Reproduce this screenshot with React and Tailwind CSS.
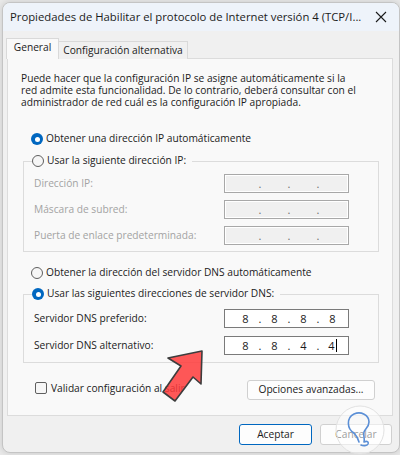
import React from "react";

const font = { fontFamily: '"Open Sans", "Noto Sans", sans-serif' };

const Radio = ({ checked }) =>
  checked ? (
    <span className="w-[12px] h-[12px] rounded-full bg-[#0067c0] flex items-center justify-center shrink-0">
      <span className="w-[5px] h-[5px] rounded-full bg-white"></span>
    </span>
  ) : (
    <span className="w-[12px] h-[12px] rounded-full border border-[#5f5f5f] bg-[#f6f6f6] shrink-0"></span>
  );

const IpBox = ({ values, disabled, cursor }) => (
  <div
    className={`w-[125px] h-[19px] border flex items-center pl-[11px] text-[11px] ${
      disabled
        ? "bg-[#f0f0f0] border-[#a8a8a8] shadow-[inset_0_0_0_1px_#ffffff] text-[#6d6d6d]"
        : "bg-white border-[#7a7a7a] text-[#1b1b1b]"
    }`}
  >
    {[0, 1, 2, 3].map((i) => (
      <React.Fragment key={i}>
        <span className="w-[19px] text-center leading-none flex items-center justify-center">
          {values ? values[i] : ""}
          {cursor && i === 3 && <span className="inline-block w-px h-[13px] bg-black ml-[1px]"></span>}
        </span>
        {i < 3 && <span className="w-[10px] text-center leading-none">.</span>}
      </React.Fragment>
    ))}
  </div>
);

const Row = ({ label, disabled, children }) => (
  <div className="h-[19px] flex items-center">
    <span className={`w-[190px] ${disabled ? "text-[#a3a3a3]" : "text-[#1b1b1b]"}`}>{label}</span>
    {children}
  </div>
);

const App = () => {
  return (
    <div className="w-[400px] h-[455px] bg-[#e9e9e9] pt-[2px] pl-[2px] relative overflow-hidden" style={font}>
      <div className="w-[398px] h-[451px] rounded-[8px] border border-[#c4c4c4] bg-[#f0f0f0] overflow-hidden flex flex-col shadow-[0_0_6px_rgba(0,0,0,0.15)]">
        {/* title bar */}
        <div className="h-[28px] bg-[#eef3fa] flex items-center justify-between pl-[7px] pr-[12px] shrink-0">
          <span className="text-[11.3px] text-[#1b1b1b] whitespace-nowrap">
            Propiedades de Habilitar el protocolo de Internet versión 4 (TCP/I...
          </span>
          <svg width="12" height="12" viewBox="0 0 12 12" className="shrink-0">
            <path d="M1 1 L11 11 M11 1 L1 11" stroke="#1b1b1b" strokeWidth="1.1" />
          </svg>
        </div>

        {/* tabs */}
        <div className="flex items-end pl-[3px] mt-[7px] h-[21px] relative z-10 text-[10.2px] text-[#1b1b1b] whitespace-nowrap">
          <div className="h-[21px] w-[53px] bg-[#f9f9f9] border border-b-0 border-[#d9d9d9] flex items-center justify-center pb-[2px]">
            General
          </div>
          <div className="h-[18px] w-[129px] bg-[#f0f0f0] border border-l-0 border-b-0 border-[#d9d9d9] flex items-center justify-center">
            Configuración alternativa
          </div>
        </div>

        {/* panel */}
        <div className="ml-[4px] w-[386px] h-[358px] -mt-px bg-[#f9f9f9] border border-[#dcdcdc] text-[10.2px] text-[#1b1b1b] flex flex-col whitespace-nowrap">
          <div className="mt-[13px] ml-[13px] leading-[12px] flex flex-col">
            <span>Puede hacer que la configuración IP se asigne automáticamente si la</span>
            <span>red admite esta funcionalidad. De lo contrario, deberá consultar con el</span>
            <span>administrador de red cuál es la configuración IP apropiada.</span>
          </div>

          <div className="mt-[23px] ml-[23px] h-[16px] flex items-center gap-[3px]">
            <Radio checked />
            <span>Obtener una dirección IP automáticamente</span>
          </div>

          <fieldset className="mt-[6px] ml-[15px] mr-[13px] border border-[#dcdcdc] pb-[6px]">
            <legend className="ml-[8px] pr-[6px] h-[16px] flex items-center gap-[3px]">
              <Radio />
              <span>Usar la siguiente dirección IP:</span>
            </legend>
            <div className="pt-[5px] pl-[10px] flex flex-col gap-[7px]">
              <Row label="Dirección IP:" disabled>
                <IpBox disabled />
              </Row>
              <Row label="Máscara de subred:" disabled>
                <IpBox disabled />
              </Row>
              <Row label="Puerta de enlace predeterminada:" disabled>
                <IpBox disabled />
              </Row>
            </div>
          </fieldset>

          <div className="mt-[13px] ml-[23px] h-[16px] flex items-center gap-[3px]">
            <Radio />
            <span>Obtener la dirección del servidor DNS automáticamente</span>
          </div>

          <fieldset className="mt-[5px] ml-[15px] mr-[13px] border border-[#dcdcdc] pb-[7px]">
            <legend className="ml-[8px] pr-[6px] h-[16px] flex items-center gap-[3px]">
              <Radio checked />
              <span>Usar las siguientes direcciones de servidor DNS:</span>
            </legend>
            <div className="pt-[7px] pl-[10px] flex flex-col gap-[8px]">
              <Row label="Servidor DNS preferido:">
                <IpBox values={["8", "8", "8", "8"]} />
              </Row>
              <Row label="Servidor DNS alternativo:">
                <IpBox values={["8", "8", "4", "4"]} cursor />
              </Row>
            </div>
          </fieldset>

          <div className="mt-[17px] ml-[27px] mr-[17px] h-[20px] flex items-center justify-between">
            <div className="flex items-center gap-[4px] mt-[-3px]">
              <span className="w-[12px] h-[12px] rounded-[2px] border border-[#5f5f5f] bg-[#f6f6f6]"></span>
              <span>Validar configuración al salir</span>
            </div>
            <button className="w-[128px] h-[20px] rounded-[3px] border border-[#d0d0d0] bg-[#fdfdfd] text-[10.2px]">
              Opciones avanzadas...
            </button>
          </div>
        </div>

        {/* dialog buttons */}
        <div className="mt-[8px] flex justify-end gap-[8px] pr-[7px] text-[10.2px] text-[#1b1b1b]">
          <button className="w-[73px] h-[21px] rounded-[3px] border border-[#0067c0] bg-[#fdfdfd]">Aceptar</button>
          <button className="w-[72px] h-[21px] rounded-[3px] border border-[#d0d0d0] bg-[#fdfdfd]">Cancelar</button>
        </div>
      </div>

      {/* red arrow annotation */}
      <svg className="absolute left-0 top-0 pointer-events-none" width="400" height="455" viewBox="0 0 400 455">
        <path
          d="M202 351 L168 358 L181 366 L163 392 L175 401 L193 377 L201 384 Z"
          fill="#ff3b3b"
          fillOpacity="0.85"
          stroke="#3d3d3d"
          strokeWidth="1.6"
          strokeLinejoin="round"
        />
      </svg>

      {/* watermark logo */}
      <svg className="absolute left-[334px] top-[404px] pointer-events-none" width="52" height="52" viewBox="0 0 52 52">
        <circle cx="26" cy="26" r="24" fill="#ffffff" fillOpacity="0.55" stroke="#e2e2e2" strokeWidth="1" />
        <path
          d="M20 29 C13 25 12 14 20 10 C27 7 35 11 35 18 C35 23 31 25 30 28 C29 31 31 34 30 38 C32 37 35 37 34 40 C33 42 29 42 27 41"
          fill="none"
          stroke="#5b8fd6"
          strokeWidth="1.6"
          strokeLinecap="round"
          strokeLinejoin="round"
        />
        <path d="M20 29 C22 31 24 34 25 38" fill="none" stroke="#5b8fd6" strokeWidth="1.6" strokeLinecap="round" />
      </svg>
    </div>
  );
};

export default App;
